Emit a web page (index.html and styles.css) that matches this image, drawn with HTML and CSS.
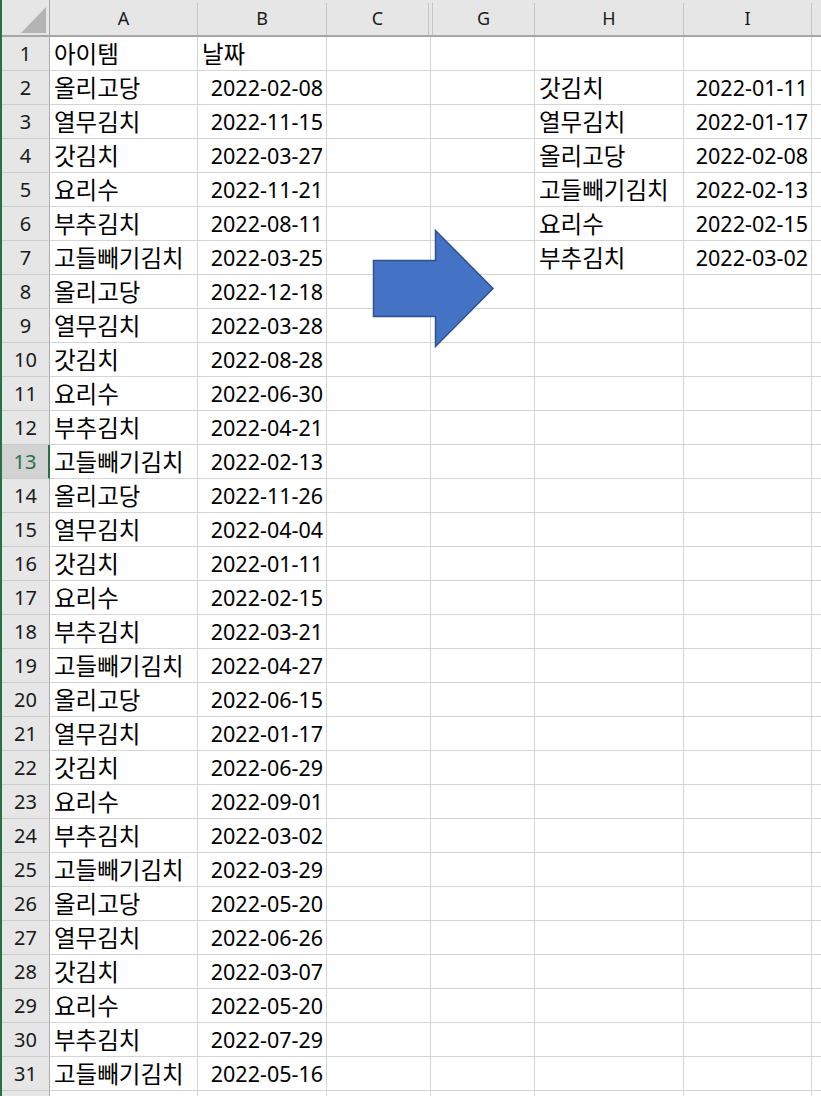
FILE: index.html
```html
<!DOCTYPE html>
<html lang="ko">
<head>
<meta charset="utf-8">
<title>Sheet</title>
<link rel="stylesheet" href="styles.css">
</head>
<body>
<div class="sheet">
  <div class="hrow">
    <div class="corner"><svg class="tri" width="26" height="27" viewBox="0 0 26 27"><polygon points="0,26 25,26 25,0" fill="#b4b4b4"/></svg></div>
    <div class="hc ca">A</div>
    <div class="hc cb">B</div>
    <div class="hc cc2">C</div>
    <div class="hc gap"></div>
    <div class="hc cg2">G</div>
    <div class="hc ch">H</div>
    <div class="hc ci">I</div>
    <div class="hc cj"></div>
  </div>
  <div id="rows"></div>
</div>
<svg class="arrow" width="821" height="1096" viewBox="0 0 821 1096">
  <polygon points="373.5,260.5 435.5,260.5 435.5,230.5 493,288.5 435.5,346.5 435.5,316.5 373.5,316.5" fill="#4472c4" stroke="#2f528f" stroke-width="1.5"/>
</svg>
<script src="app.js"></script>
</body>
</html>
```
FILE: app.js
```js
var a = [
  ["아이템","날짜"],
  ["올리고당","2022-02-08"],["열무김치","2022-11-15"],["갓김치","2022-03-27"],["요리수","2022-11-21"],
  ["부추김치","2022-08-11"],["고들빼기김치","2022-03-25"],["올리고당","2022-12-18"],["열무김치","2022-03-28"],
  ["갓김치","2022-08-28"],["요리수","2022-06-30"],["부추김치","2022-04-21"],["고들빼기김치","2022-02-13"],
  ["올리고당","2022-11-26"],["열무김치","2022-04-04"],["갓김치","2022-01-11"],["요리수","2022-02-15"],
  ["부추김치","2022-03-21"],["고들빼기김치","2022-04-27"],["올리고당","2022-06-15"],["열무김치","2022-01-17"],
  ["갓김치","2022-06-29"],["요리수","2022-09-01"],["부추김치","2022-03-02"],["고들빼기김치","2022-03-29"],
  ["올리고당","2022-05-20"],["열무김치","2022-06-26"],["갓김치","2022-03-07"],["요리수","2022-05-20"],
  ["부추김치","2022-07-29"],["고들빼기김치","2022-05-16"],["",""]
];
var h = {2:["갓김치","2022-01-11"],3:["열무김치","2022-01-17"],4:["올리고당","2022-02-08"],5:["고들빼기김치","2022-02-13"],6:["요리수","2022-02-15"],7:["부추김치","2022-03-02"]};
var rows = document.getElementById("rows");
var html = "";
for (var i = 0; i < a.length; i++) {
  var n = i + 1;
  var hv = h[n] || ["",""];
  var bcls = n === 1 ? "c cb kr" : "c cb num";
  var label = n <= 31 ? n : "";
  html += '<div class="row' + (n === 1 ? ' first' : '') + '">' +
    '<div class="rh' + (n === 13 ? ' sel' : '') + '">' + label + '</div>' +
    '<div class="c ca kr">' + a[i][0] + '</div>' +
    '<div class="' + bcls + '">' + a[i][1] + '</div>' +
    '<div class="c cc"></div>' +
    '<div class="c cg"></div>' +
    '<div class="c ch kr">' + hv[0] + '</div>' +
    '<div class="c ci num">' + hv[1] + '</div>' +
    '<div class="c cj"></div>' +
    '</div>';
}
rows.innerHTML = html;
```
FILE: styles.css
```css
* { box-sizing: border-box; }
html, body { margin: 0; padding: 0; background: #fff; }
body {
  width: 821px;
  height: 1096px;
  overflow: hidden;
  position: relative;
  font-family: "Noto Sans", "Noto Sans CJK KR", sans-serif;
  color: #000;
}
.sheet {
  border-left: 2px solid #217346;
  height: 1096px;
}
.hrow {
  display: flex;
  height: 37px;
  padding-top: 3px;
  background: #e6e6e6;
  border-bottom: 2px solid #a6a6a6;
}
.corner {
  width: 48px;
  flex: none;
  margin-top: -3px;
  border-right: 1px solid #ababab;
  position: relative;
}
.tri { position: absolute; left: 19px; top: 7px; }
.hc {
  flex: none;
  border-right: 1px solid #c4c4c4;
  font-size: 18px;
  line-height: 31px;
  text-align: center;
  color: #1a1a1a;
}
.ca { width: 148px; }
.cb { width: 129px; }
.cc { width: 104px; }
.cc2 { width: 102px; }
.gap { width: 4px; }
.cg { width: 104px; }
.cg2 { width: 102px; }
.ch { width: 149px; }
.ci { width: 128px; }
.cj { flex: 1 1 auto; border-right: none; }
.row {
  display: flex;
  height: 34px;
}
.rh {
  width: 48px;
  flex: none;
  background: #e6e6e6;
  border-right: 1px solid #ababab;
  border-bottom: 1px solid #cbcbcb;
  font-size: 20px;
  line-height: 33px;
  text-align: center;
  color: #1a1a1a;
}
.rh.sel {
  background: #d2d2d2;
  color: #217346;
  border-right: 2px solid #217346;
}
.c {
  flex: none;
  border-right: 1px solid #d4d4d4;
  border-bottom: 1px solid #d4d4d4;
  font-size: 21.5px;
  line-height: 33px;
  padding: 0 3px 0 4px;
  white-space: nowrap;
  overflow: hidden;
}
.c.kr {
  font-family: "Noto Sans CJK KR", sans-serif;
  font-size: 23.5px;
  line-height: 32px;
  padding-left: 4px;
}
.c.cj { flex: 1 1 auto; border-right: none; }
.num { text-align: right; }
.arrow { position: absolute; left: 0; top: 0; pointer-events: none; }
```
